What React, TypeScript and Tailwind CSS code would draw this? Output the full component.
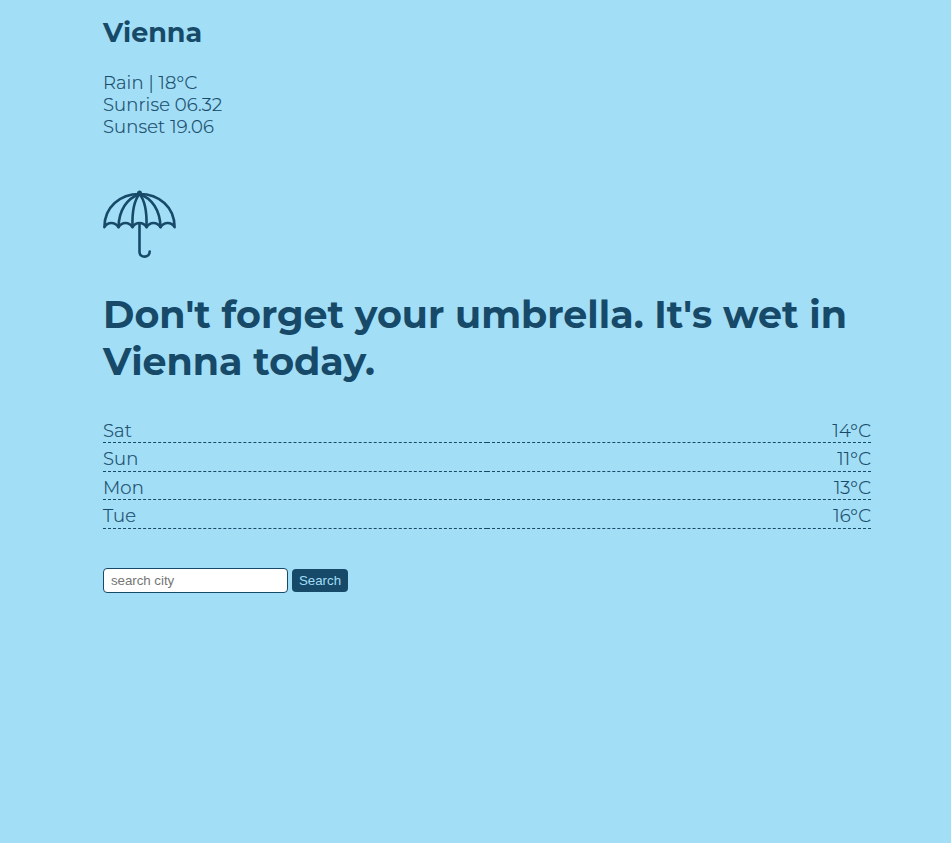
const days = [
  { day: "Sat", temp: "14°C", row: "h-[29px]", nudge: "" },
  { day: "Sun", temp: "11°C", row: "h-[29px]", nudge: "mb-px" },
  { day: "Mon", temp: "13°C", row: "h-[28px]", nudge: "" },
  { day: "Tue", temp: "16°C", row: "h-[29px]", nudge: "mb-px" },
];

function Umbrella() {
  return (
    <svg className="block h-[69px] w-[73px]" viewBox="0 0 73 69" fill="none" stroke="#164a68" strokeWidth="2.6" strokeLinecap="round" strokeLinejoin="round">
      <path d="M1.4 37.2C1.4 17 17 4 36.500 4S71.600 17 71.600 37.200C68.500 31.500 61 31.500 57.500 37.200C54 31.500 47 31.500 43.500 37.200C40.500 31.500 32.500 31.500 29.500 37.200C26 31.500 19 31.500 15.500 37.200C12 31.500 4.500 31.500 1.400 37.200Z" />
      <path d="M36.500 4C24 8.500 16 20 15.500 37M36.500 4C31.500 10 29 22 29.500 37M36.500 4C41.500 10 44 22 43.500 37M36.500 4C49 8.500 57 20 57.500 37" />
      <path d="M36.500 34V62C36.500 68.300 46.700 68.300 46.700 61.500" />
      <circle cx="36.500" cy="3" r="1.200" fill="#164a68" />
    </svg>
  );
}

export default function App() {
  return (
    <div className="min-h-screen bg-[#a3def7] pr-20 pl-[103px] font-['Montserrat','Inter',sans-serif] text-lg leading-[22px] font-light text-[#164a68]">
      <h2 className="pt-4 text-[27px] leading-[34px] font-bold">Vienna</h2>
      <div className="mt-[22px] tracking-[0.13px] [-webkit-text-stroke:0.2px_#164a68]">
        <p>Rain | 18°C</p>
        <p>Sunrise 06.32</p>
        <p>Sunset 19.06</p>
      </div>
      <div className="mt-[52px]"><Umbrella /></div>
      <h1 className="mt-8 text-[38px] leading-[47px] font-bold">
        Don't forget your umbrella. It's wet in Vienna today.
      </h1>
      <div className="mt-[29px] tracking-[0.13px] [-webkit-text-stroke:0.2px_#164a68]">
        {days.map((d) => (
          <div key={d.day} className={`grid grid-cols-2 ${d.row}`}>
            <div className="flex items-end border-b border-dashed border-[#164a68]"><span className={d.nudge}>{d.day}</span></div>
            <div className="flex items-end justify-end border-b border-dashed border-[#164a68]"><span className={d.nudge}>{d.temp}</span></div>
          </div>
        ))}
      </div>
      <form className="mt-[39px] flex items-center gap-1 font-['Liberation_Sans',Arial,sans-serif] text-[13.333px] leading-[15px] font-normal">
        <input placeholder="search city" className="h-[25px] w-[185px] rounded border border-[#164a68] bg-white px-[7px] tracking-[-0.05px] placeholder:text-[#757575]" />
        <button type="button" className="h-[23px] w-14 rounded bg-[#164a68] text-[#a3def7]">Search</button>
      </form>
    </div>
  );
}
